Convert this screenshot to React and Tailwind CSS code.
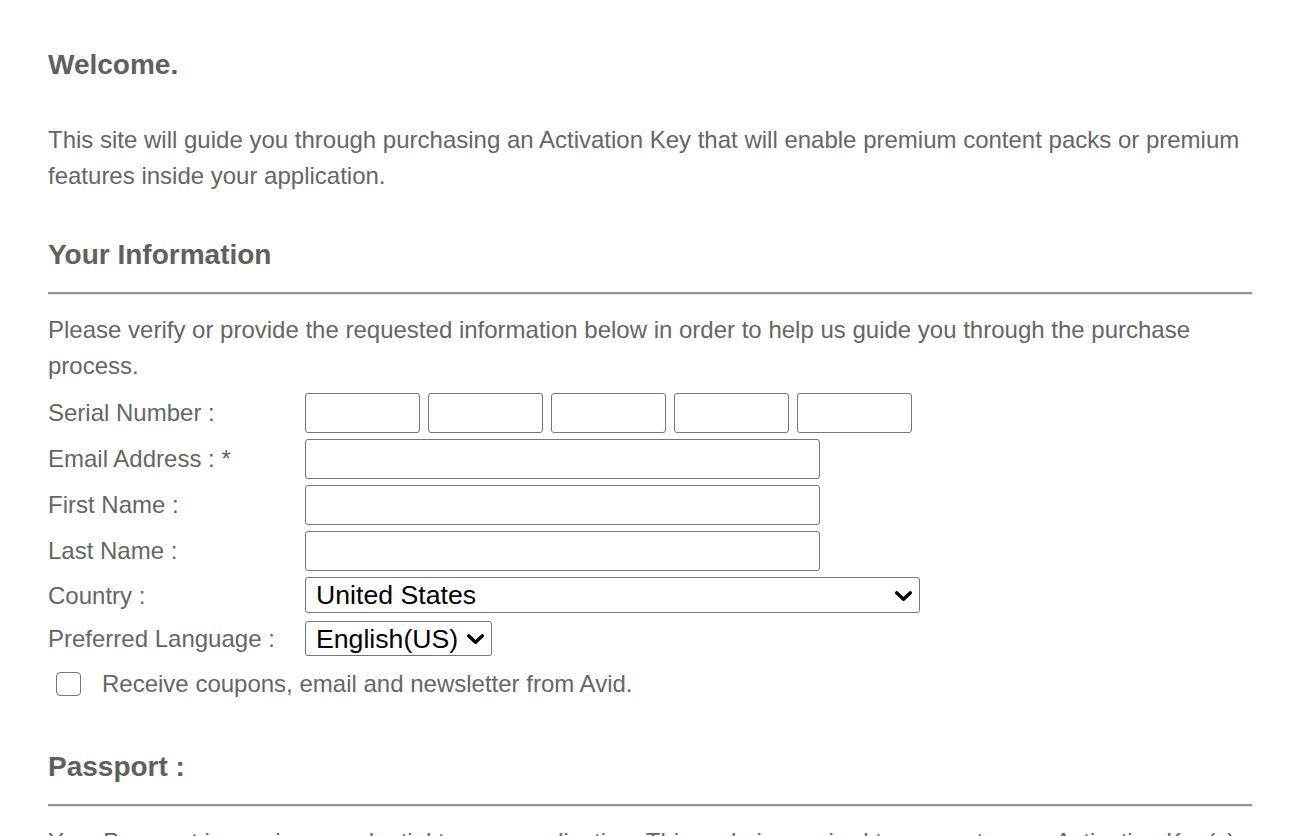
function Chevron() {
  return (
    <svg
      viewBox="0 0 18 11"
      className="pointer-events-none absolute right-[7px] top-1/2 h-[12px] w-[19px] -translate-y-1/2"
      fill="none"
      stroke="black"
      strokeWidth="3.2"
      strokeLinecap="round"
      strokeLinejoin="round"
    >
      <path d="M2.5 2.5L9 8.5L15.5 2.5" />
    </svg>
  );
}

export default function App() {
  const fields = [
    { label: "Email Address : *", name: "email" },
    { label: "First Name :", name: "first" },
    { label: "Last Name :", name: "last" },
  ];

  return (
    <div className="min-h-screen bg-white px-12 pt-[47px] font-['Liberation_Sans',Arial,sans-serif] text-[24px] leading-[36px] text-[#666]">
      <h1 className="text-[28px] font-bold text-[#606060]">Welcome.</h1>

      <p className="mt-[39px]">
        This site will guide you through purchasing an Activation Key that will enable premium content packs or premium
        features inside your application.
      </p>

      {/* Your Information */}
      <h2 className="mt-[43px] text-[28px] font-bold text-[#606060]">Your Information</h2>
      <div className="mt-[19px] border-t-2 border-t-[#939393] border-b border-b-[#e4e4e4]" />

      <p className="mt-[17px]">
        Please verify or provide the requested information below in order to help us guide you through the purchase
        process.
      </p>

      <div className="mt-[9px] flex flex-col gap-[6px]">
        <div className="flex items-center">
          <label className="w-[257px] shrink-0">Serial Number :</label>
          <div className="flex gap-[8px]">
            {[0, 1, 2, 3, 4].map((i) => (
              <input
                key={i}
                type="text"
                className="h-[40px] w-[115px] rounded-[3px] border border-[#767676] bg-white px-2 text-black outline-none"
              />
            ))}
          </div>
        </div>

        {fields.map((f) => (
          <div key={f.name} className="flex items-center">
            <label className="w-[257px] shrink-0">{f.label}</label>
            <input
              type="text"
              className="h-[40px] w-[515px] rounded-[3px] border border-[#767676] bg-white px-2 text-black outline-none"
            />
          </div>
        ))}

        <div className="flex items-center">
          <label className="w-[257px] shrink-0">Country :</label>
          <div className="relative">
            <select
              defaultValue="US"
              className="h-[36px] w-[615px] appearance-none rounded-[3px] border border-[#767676] bg-white pl-[10px] pr-[30px] text-[26.67px] leading-[30px] text-black"
            >
              <option value="US">United States</option>
              <option value="CA">Canada</option>
              <option value="GB">United Kingdom</option>
            </select>
            <Chevron />
          </div>
        </div>

        <div className="mt-[1px] flex items-center">
          <label className="w-[257px] shrink-0">Preferred Language :</label>
          <div className="relative">
            <select
              defaultValue="en"
              className="h-[35px] w-[187px] appearance-none rounded-[3px] border border-[#767676] bg-white pl-[10px] pr-[30px] text-[26.67px] leading-[30px] text-black"
            >
              <option value="en">English(US)</option>
              <option value="fr">Français</option>
            </select>
            <Chevron />
          </div>
        </div>
      </div>

      <label className="mt-[8px] flex items-center">
        <input
          type="checkbox"
          className="ml-[8px] h-[24px] w-[25px] appearance-none rounded-[4px] border border-[#767676] bg-white"
        />
        <span className="ml-[21px]">Receive coupons, email and newsletter from Avid.</span>
      </label>

      {/* Passport */}
      <h2 className="mt-[47px] text-[28px] font-bold text-[#606060]">Passport :</h2>
      <div className="mt-[19px] border-t-2 border-t-[#939393] border-b border-b-[#e4e4e4]" />

      <p className="mt-[17px]">
        Your Passport is a unique credential to your application. This code is required to generate your Activation
        Key(s).
      </p>
    </div>
  );
}
